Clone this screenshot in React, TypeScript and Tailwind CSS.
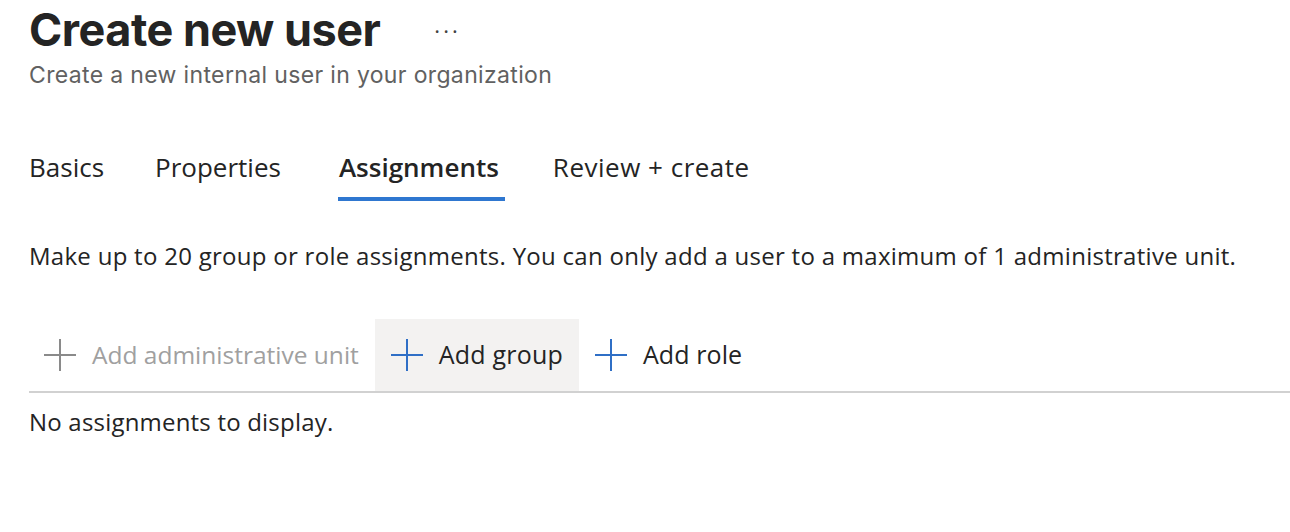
const body = { fontFamily: '"Open Sans", "Noto Sans", sans-serif' };

function Plus({ className }: { className: string }) {
  return (
    <svg width="32" height="32" viewBox="0 0 32 32" className={className}>
      <path d="M16 0v32M0 16h32" stroke="currentColor" strokeWidth="2" fill="none" />
    </svg>
  );
}

export default function App() {
  return (
    <div className="min-h-screen bg-white pl-[29px] pt-[2px] text-[#242424]" style={body}>
      <div className="flex items-center">
        <h1
          className="text-[45px] leading-[56px] font-bold tracking-[-0.5px] text-[#242424]"
          style={{ fontFamily: "Inter, sans-serif" }}
        >
          Create new user
        </h1>
        <span className="ml-[54px] text-[22px] tracking-[3px] text-[#424242]">···</span>
      </div>
      <p
        className="mt-[2px] text-[23px] leading-[30px] tracking-[0.35px] text-[#616161]"
        style={{ fontFamily: "Inter, sans-serif" }}
      >
        Create a new internal user in your organization
      </p>

      <div className="mt-[58px] flex items-start">
        <div className="flex flex-col">
          <span className="text-[26px] leading-[38px]">Basics</span>
        </div>
        <div className="ml-[51px] flex flex-col">
          <span className="text-[26px] leading-[38px]">Properties</span>
        </div>
        <div className="ml-[57px] flex flex-col">
          <span className="pl-[1px] pr-[6px] text-[26px] leading-[38px] font-semibold">Assignments</span>
          <div className="mt-[11px] h-[4px] bg-[#2f77d0]" />
        </div>
        <div className="ml-[48px] flex flex-col">
          <span className="text-[26px] leading-[38px] tracking-[0.5px]">Review + create</span>
        </div>
      </div>

      <p className="mt-[40px] text-[24px] leading-[30px] tracking-[0.28px]">
        Make up to 20 group or role assignments. You can only add a user to a maximum of 1 administrative unit.
      </p>

      <div className="mt-[48px] flex border-b-2 border-[#d1d1d1]">
        <button className="flex h-[72px] items-center gap-4 pl-[15px] pr-4 text-[#a0a0a0]">
          <Plus className="text-[#8a8a8a]" />
          <span className="text-[24.5px]">Add administrative unit</span>
        </button>
        <button className="flex h-[72px] items-center gap-4 bg-[#f3f2f1] px-4 text-[#242424]">
          <Plus className="text-[#2f6fc6]" />
          <span className="text-[25px] tracking-[0.2px]">Add group</span>
        </button>
        <button className="flex h-[72px] items-center gap-4 px-4 text-[#242424]">
          <Plus className="text-[#2f6fc6]" />
          <span className="text-[25px] tracking-[0.1px]">Add role</span>
        </button>
      </div>

      <p className="mt-[14px] text-[24px] leading-[30px] tracking-[0.2px]">No assignments to display.</p>
    </div>
  );
}
